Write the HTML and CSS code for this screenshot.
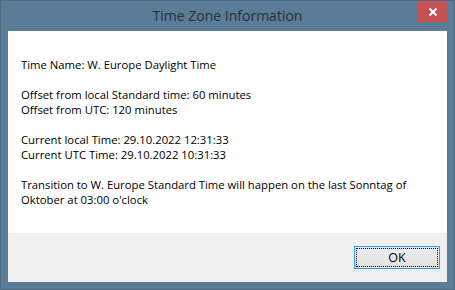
FILE: index.html
```html
<!doctype html>
<html>

<head>
    <meta charset="utf-8">
    <title>Time Zone Information</title>
    <link rel="stylesheet" href="styles.css">
</head>

<body>
    <div class="window">
        <div class="titlebar">
            <span class="title">Time Zone Information</span>
            <div class="close">
                <svg width="10" height="10" viewBox="0 0 10 10">
                    <path d="M1.5 1.5 L8.5 8.5 M8.5 1.5 L1.5 8.5" stroke="#fff" stroke-width="2" />
                </svg>
            </div>
        </div>
        <div class="client">
            <div class="info">
                <p>Time Name: W. Europe Daylight Time</p>
                <p>Offset from local Standard time: 60 minutes<br />
                    Offset from UTC: 120 minutes</p>
                <p>Current local Time: 29.10.2022 12:31:33<br />
                    Current UTC Time: 29.10.2022 10:31:33</p>
                <p>Transition to W. Europe Standard Time will happen on the last Sonntag of<br />
                    Oktober at 03:00 o'clock</p>
            </div>
            <div class="footer">
                <button class="btn">OK</button>
            </div>
        </div>
    </div>
</body>

</html>
```

FILE: styles.css
```css
html, body {
    margin: 0;
    padding: 0;
}
body {
    font-family: "Open Sans", "Noto Sans", sans-serif;
    font-size: 12px;
}
.window {
    position: relative;
    width: 455px;
    height: 290px;
    box-sizing: border-box;
    background-color: #5a7c96;
    border: 1px solid #4b6a82;
    padding: 0 7px 7px 7px;
    display: flex;
    flex-direction: column;
}
.titlebar {
    height: 30px;
    display: flex;
    align-items: center;
    justify-content: center;
}
.title {
    color: #26303a;
    font-size: 14px;
    margin-top: -1px;
}
.close {
    position: absolute;
    top: 0;
    right: 6px;
    width: 31px;
    height: 21px;
    background-color: #c75050;
    display: flex;
    align-items: center;
    justify-content: center;
}
.client {
    flex: 1;
    display: flex;
    flex-direction: column;
}
.info {
    flex: 1;
    background-color: #fff;
    padding: 26px 13px 0 13px;
    color: #000;
    font-size: 11.3px;
    line-height: 15px;
    white-space: nowrap;
}
.info p {
    margin: 0 0 15px 0;
}
.footer {
    height: 49px;
    background-color: #f0f0f0;
    display: flex;
    align-items: center;
    justify-content: flex-end;
    padding-right: 7px;
}
.btn {
    width: 86px;
    height: 23px;
    font-family: inherit;
    font-size: 12.5px;
    color: #000;
    border: 1px solid #3399ff;
    background: linear-gradient(#ececec, #e2e2e2);
    outline: 1px dotted #000;
    outline-offset: -3px;
    padding: 0;
}
```
